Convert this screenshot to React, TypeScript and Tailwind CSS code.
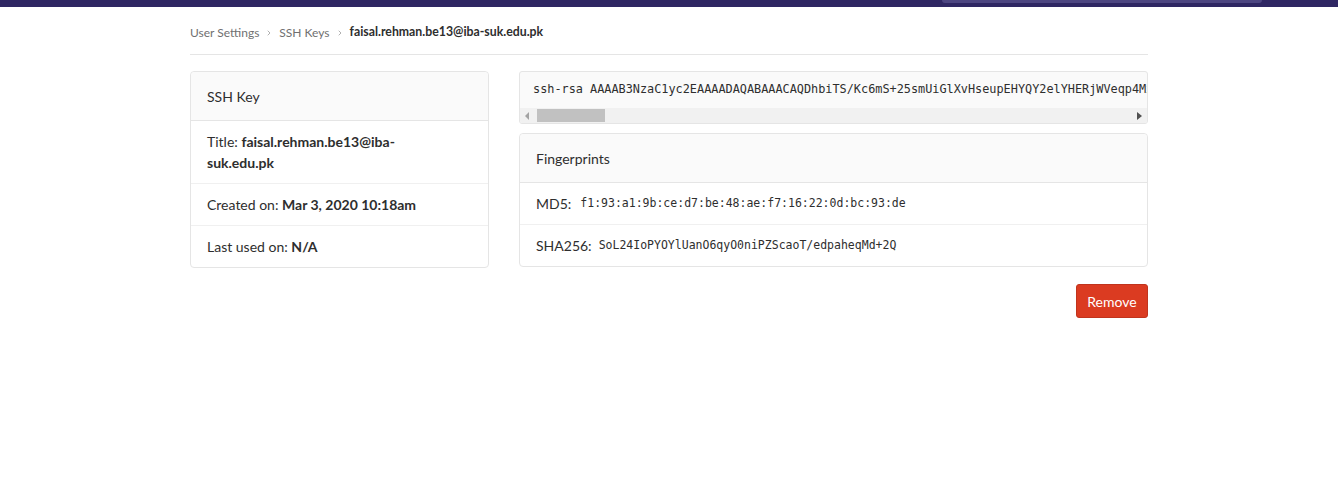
import { ChevronRight } from "lucide-react"

const sshKey =
    "ssh-rsa AAAAB3NzaC1yc2EAAAADAQABAAACAQDhbiTS/Kc6mS+25smUiGlXvHseupEHYQY2elYHERjWVeqp4MxQ7Lh0r3aWkV9pZt8sJcN2mFyU4bDqE6gHn1XoKiPvRz5YwT0lAeS7dCjM3uNfB9tLr2hGQxW4pVy8kZc1oIbEa6sDmTnFJ5gHuRqXlYw2vP7eKd0iCzS3tM9jUbA4rNo8yLfQhW1xGp6VkEaZs5cDmTiBu2HJn7qRlYo3wXvPe9KdSgC0fA4tUbMz1jNyLrQ8hWxGo6pVkEiZs3cDm== faisal.rehman.be13@iba-suk.edu.pk"

export default function App() {
    return (
        <div className="min-h-[494px] w-full bg-white font-['Lato',sans-serif] text-[14px] text-[#2e2e2e]">
            {/* top navbar */}
            <div className="relative h-[7px] w-full bg-[#2f2763]">
                <div className="absolute left-[942px] top-0 h-[3px] w-[320px] rounded-b-[3px] bg-[#4d4681]" />
            </div>

            <div className="mx-auto w-[958px]">
                <div className="flex h-[48px] items-center gap-[6px] border-b border-[#e5e5e5] pt-[4px] text-[12px]">
                    <span className="text-[#707070]">User Settings</span>
                    <ChevronRight className="h-[8px] w-[8px] text-[#8a8a8a]" strokeWidth={2} />
                    <span className="text-[#707070]">SSH Keys</span>
                    <ChevronRight className="h-[8px] w-[8px] text-[#8a8a8a]" strokeWidth={2} />
                    <span className="text-[12.3px] font-bold text-[#2e2e2e]">faisal.rehman.be13@iba-suk.edu.pk</span>
                </div>

                <div className="mt-[16px] flex gap-[30px]">
                    {/* left card */}
                    <div className="w-[299px] shrink-0 self-start rounded-[4px] border border-[#e5e5e5]">
                        <div className="flex h-[49px] items-center rounded-t-[4px] border-b border-[#e5e5e5] bg-[#fafafa] px-[16px]">
                            SSH Key
                        </div>
                        <div className="border-b border-[#f0f0f0] px-[16px] py-[10px] leading-[21px]">
                            Title: <strong className="font-bold">faisal.rehman.be13@iba-<br />suk.edu.pk</strong>
                        </div>
                        <div className="border-b border-[#f0f0f0] px-[16px] py-[10px] leading-[21px]">
                            Created on: <strong className="font-bold">Mar 3, 2020 10:18am</strong>
                        </div>
                        <div className="px-[16px] py-[10px] leading-[21px]">
                            Last used on: <strong className="font-bold">N/A</strong>
                        </div>
                    </div>

                    {/* right column */}
                    <div className="flex min-w-0 flex-1 flex-col">
                        <div className="overflow-hidden rounded-[3px] border border-[#e5e5e5] bg-[#fafafa]">
                            <div className="overflow-hidden whitespace-pre pl-[13px] pt-[8px] pb-[10px] font-['DejaVu_Sans_Mono',monospace] text-[11.85px] leading-[18px] text-[#2e2e2e]">
                                {sshKey}
                            </div>
                            <div className="flex h-[15px] items-center bg-[#f1f1f1]">
                                <div className="flex w-[15px] items-center justify-center">
                                    <svg width="5" height="8" viewBox="0 0 5 8"><path d="M4 0 L0 4 L4 8 Z" fill="#a3a3a3" /></svg>
                                </div>
                                <div className="ml-[2px] h-[13px] w-[68px] bg-[#c1c1c1]" />
                                <div className="flex-1" />
                                <div className="flex w-[15px] items-center justify-center">
                                    <svg width="5" height="8" viewBox="0 0 5 8"><path d="M0 0 L5 4 L0 8 Z" fill="#505050" /></svg>
                                </div>
                            </div>
                        </div>

                        <div className="mt-[9px] rounded-[4px] border border-[#e5e5e5]">
                            <div className="flex h-[49px] items-center rounded-t-[4px] border-b border-[#e5e5e5] bg-[#fafafa] px-[16px]">
                                Fingerprints
                            </div>
                            <div className="flex h-[42px] items-center border-b border-[#f0f0f0] px-[16px]">
                                <span>MD5:</span>
                                <code className="ml-[9px] pt-[1px] font-['DejaVu_Sans_Mono',monospace] text-[11.5px]">f1:93:a1:9b:ce:d7:be:48:ae:f7:16:22:0d:bc:93:de</code>
                            </div>
                            <div className="flex h-[41px] items-center px-[16px]">
                                <span>SHA256:</span>
                                <code className="ml-[7px] pt-[1px] font-['DejaVu_Sans_Mono',monospace] text-[11.5px]">SoL24IoPYOYlUanO6qyO0niPZScaoT/edpaheqMd+2Q</code>
                            </div>
                        </div>

                        <div className="mt-[17px] flex justify-end">
                            <button className="h-[34px] w-[72px] rounded-[3px] border border-[#c0341d] bg-[#db3b21] text-[14px] text-white">
                                Remove
                            </button>
                        </div>
                    </div>
                </div>
            </div>
        </div>
    )
}
